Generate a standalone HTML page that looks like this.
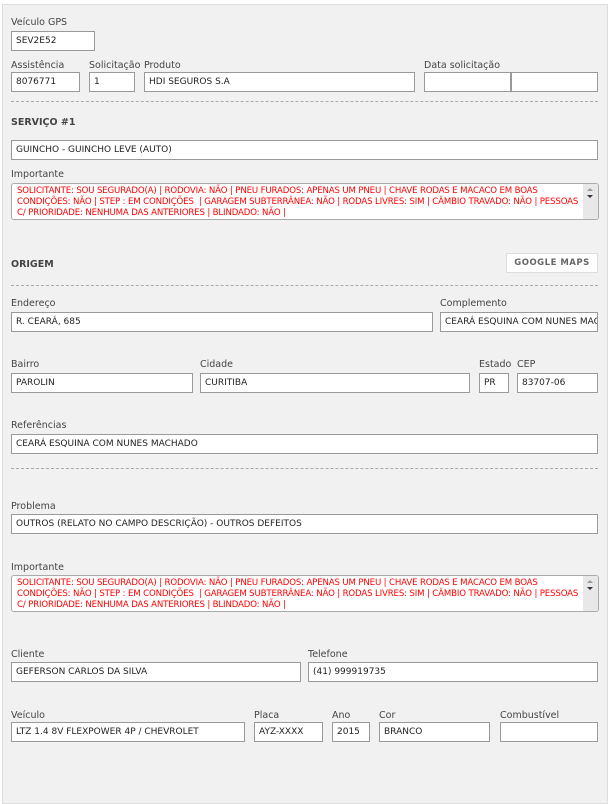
<!DOCTYPE html>
<html><head><meta charset="utf-8"><style>
*{box-sizing:border-box;margin:0;padding:0}
body{width:616px;height:798px;background:#fff;position:relative;overflow:hidden;font-family:"DejaVu Sans","Liberation Sans",sans-serif;font-size:9.5px;color:#333}
#p{position:absolute;left:2px;top:4px;width:606px;height:800px;background:#f1f1f1;border:1px solid #ddd}
.l{position:absolute;color:#444;white-space:nowrap;margin-top:2px}
.i{position:absolute;height:20px;background:#fff;border:1px solid #999;padding:0 4px;line-height:18px;color:#222;white-space:nowrap;overflow:hidden;font-size:9px}
.d{position:absolute;left:11px;width:587px;border-top:1px dashed #aaa}
.h{position:absolute;font-weight:bold;color:#444;font-size:9.5px;margin-top:2px}
.t{position:absolute;left:11px;width:588px;height:37px;background:#fff;border:1px solid #aaa;border-radius:3px;color:#f00;font-size:8.6px;line-height:11px;padding:2px 0 0 5px;overflow:hidden;letter-spacing:-0.15px}
.tx{width:566px}
.sb{position:absolute;right:0;top:0;width:15px;height:35px;background:#e8e8e8}
.sb:before{content:"";position:absolute;left:4px;top:4px;border:3.5px solid transparent;border-bottom-color:#999;border-top:0}
.sb:after{content:"";position:absolute;left:4px;top:11px;border:3.5px solid transparent;border-top-color:#333;border-bottom:0}
.btn{position:absolute;left:506px;top:253px;width:92px;height:20px;background:#fff;border:1px solid #ddd;font-weight:bold;font-size:8.5px;color:#666;text-align:center;line-height:18px;letter-spacing:.5px}
</style></head><body>
<div id="p"></div>
<div class="l" style="left:11px;top:15px">Veículo GPS</div>
<div class="i" style="left:11px;top:31px;width:84px">SEV2E52</div>
<div class="l" style="left:11px;top:58px">Assistência</div>
<div class="l" style="left:89px;top:58px">Solicitação</div>
<div class="l" style="left:144px;top:58px">Produto</div>
<div class="l" style="left:424px;top:58px">Data solicitação</div>
<div class="i" style="left:11px;top:72px;width:69px">8076771</div>
<div class="i" style="left:89px;top:72px;width:46px">1</div>
<div class="i" style="left:144px;top:72px;width:271px">HDI SEGUROS S.A</div>
<div class="i" style="left:424px;top:72px;width:87px"></div>
<div class="i" style="left:511px;top:72px;width:87px"></div>
<div class="d" style="top:101px"></div>
<div class="h" style="left:11px;top:115px">SERVIÇO #1</div>
<div class="i" style="left:11px;top:140px;width:587px">GUINCHO - GUINCHO LEVE (AUTO)</div>
<div class="l" style="left:11px;top:167px">Importante</div>
<div class="t" style="top:183px"><div class="tx">SOLICITANTE: SOU SEGURADO(A) | RODOVIA: NÃO | PNEU FURADOS: APENAS UM PNEU | CHAVE RODAS E MACACO EM BOAS CONDIÇÕES: NÃO | STEP : EM CONDIÇÕES &nbsp;| GARAGEM SUBTERRÂNEA: NÃO | RODAS LIVRES: SIM | CÂMBIO TRAVADO: NÃO | PESSOAS C/ PRIORIDADE: NENHUMA DAS ANTERIORES | BLINDADO: NÃO |</div><div class="sb"></div></div>
<div class="h" style="left:11px;top:257px">ORIGEM</div>
<div class="btn">GOOGLE MAPS</div>
<div class="d" style="top:285px"></div>
<div class="l" style="left:11px;top:296px">Endereço</div>
<div class="l" style="left:440px;top:296px">Complemento</div>
<div class="i" style="left:11px;top:312px;width:422px">R. CEARÁ, 685</div>
<div class="i" style="left:440px;top:312px;width:158px">CEARÁ ESQUINA COM NUNES MACHADO</div>
<div class="l" style="left:11px;top:357px">Bairro</div>
<div class="l" style="left:200px;top:357px">Cidade</div>
<div class="l" style="left:479px;top:357px">Estado</div>
<div class="l" style="left:517px;top:357px">CEP</div>
<div class="i" style="left:11px;top:373px;width:182px">PAROLIN</div>
<div class="i" style="left:200px;top:373px;width:270px">CURITIBA</div>
<div class="i" style="left:479px;top:373px;width:30px">PR</div>
<div class="i" style="left:517px;top:373px;width:81px">83707-06</div>
<div class="l" style="left:11px;top:418px">Referências</div>
<div class="i" style="left:11px;top:434px;width:587px">CEARÁ ESQUINA COM NUNES MACHADO</div>
<div class="d" style="top:468px"></div>
<div class="l" style="left:11px;top:499px">Problema</div>
<div class="i" style="left:11px;top:514px;width:587px">OUTROS (RELATO NO CAMPO DESCRIÇÃO) - OUTROS DEFEITOS</div>
<div class="l" style="left:11px;top:560px">Importante</div>
<div class="t" style="top:575px"><div class="tx">SOLICITANTE: SOU SEGURADO(A) | RODOVIA: NÃO | PNEU FURADOS: APENAS UM PNEU | CHAVE RODAS E MACACO EM BOAS CONDIÇÕES: NÃO | STEP : EM CONDIÇÕES &nbsp;| GARAGEM SUBTERRÂNEA: NÃO | RODAS LIVRES: SIM | CÂMBIO TRAVADO: NÃO | PESSOAS C/ PRIORIDADE: NENHUMA DAS ANTERIORES | BLINDADO: NÃO |</div><div class="sb"></div></div>
<div class="l" style="left:11px;top:647px">Cliente</div>
<div class="l" style="left:308px;top:647px">Telefone</div>
<div class="i" style="left:11px;top:662px;width:290px">GEFERSON CARLOS DA SILVA</div>
<div class="i" style="left:308px;top:662px;width:290px">(41) 999919735</div>
<div class="l" style="left:11px;top:708px">Veículo</div>
<div class="l" style="left:254px;top:708px">Placa</div>
<div class="l" style="left:332px;top:708px">Ano</div>
<div class="l" style="left:379px;top:708px">Cor</div>
<div class="l" style="left:500px;top:708px">Combustível</div>
<div class="i" style="left:11px;top:722px;width:234px">LTZ 1.4 8V FLEXPOWER 4P / CHEVROLET</div>
<div class="i" style="left:254px;top:722px;width:69px">AYZ-XXXX</div>
<div class="i" style="left:332px;top:722px;width:38px">2015</div>
<div class="i" style="left:379px;top:722px;width:111px">BRANCO</div>
<div class="i" style="left:500px;top:722px;width:98px"></div>
</body></html>
